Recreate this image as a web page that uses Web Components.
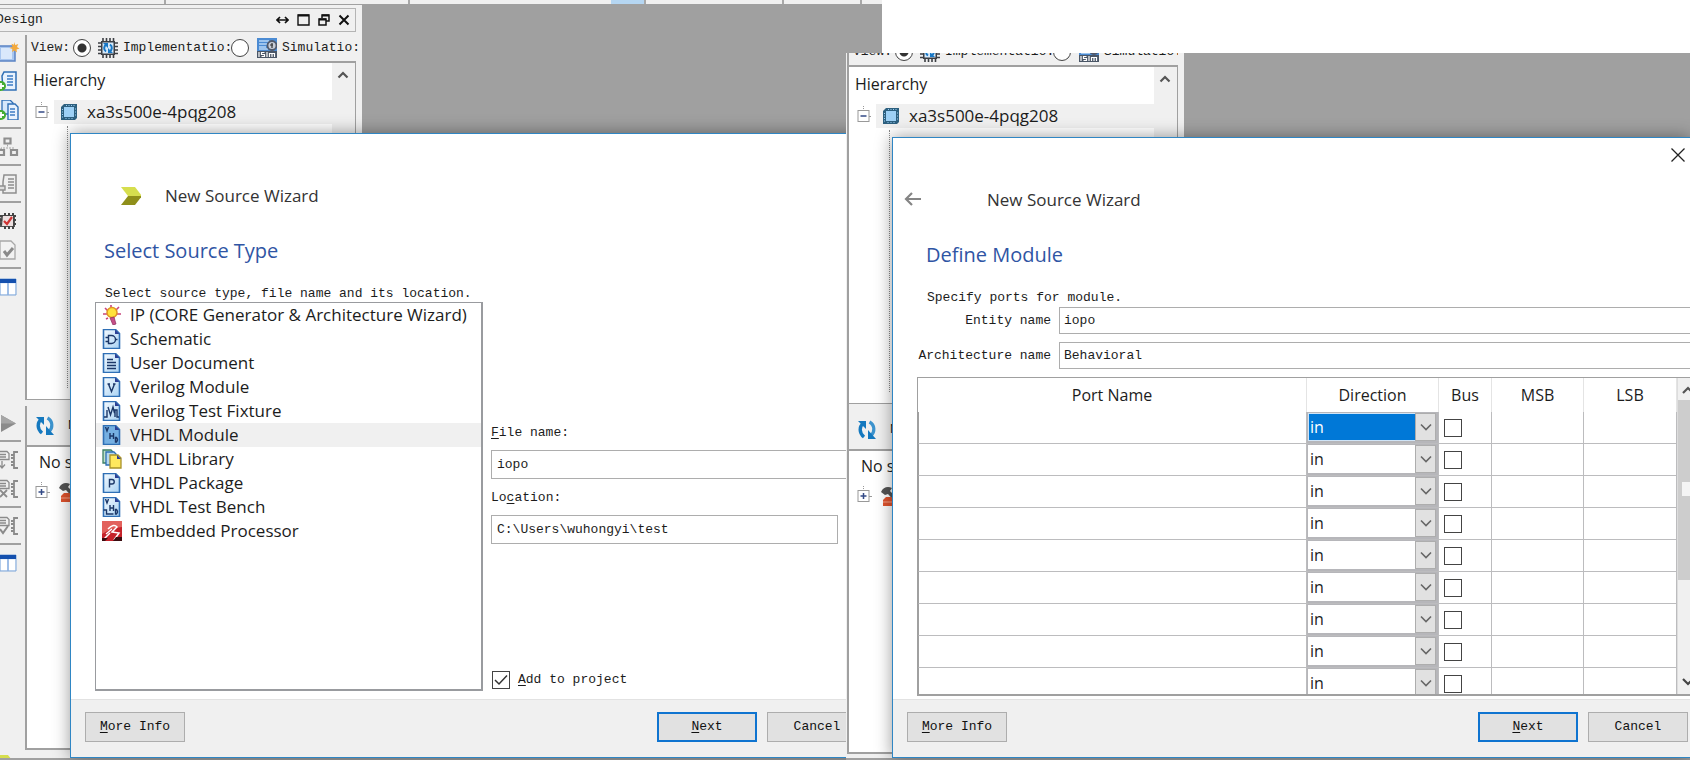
<!DOCTYPE html>
<html lang="en">
<head>
<meta charset="utf-8">
<title>New Source Wizard</title>
<style>
  html, body { margin: 0; background: #fff; }
  body {
    --ui: "Open Sans", "Noto Sans", sans-serif;
    --mono: "Liberation Mono", "DejaVu Sans Mono", monospace;
    font: 16px/24px var(--ui);
    color: #1c1c1c;
  }
</style>
</head>
<body>
<ise-page></ise-page>

<script>
const BASE = `
  *, *::before, *::after { box-sizing: border-box; }
  svg { display: block; flex: none; }
  input, select, button { font: inherit; color: inherit; margin: 0; border-radius: 0; outline: 0; }
  u { text-decoration: underline; text-underline-offset: 2px; }
`;

function define(name, css, html, setup) {
  customElements.define(name, class extends HTMLElement {
    constructor() {
      super();
      this.attachShadow({ mode: "open" });
    }
    connectedCallback() {
      const body = typeof html === "function" ? html(this) : html;
      this.shadowRoot.innerHTML = `<style>${BASE}${css}</style>${body}`;
      if (setup) setup(this);
    }
  });
}

/* ---------- icons ---------- */
const page = inner => `<path d="M1.500 .5h12l4 4v15h-16z" fill="url(#g)" stroke="#2f6fb5" stroke-width="1.600"/>
  <path d="M13 .5l4.500 4.500h-4.500z" fill="#2c3f94"/><g fill="none" stroke="#1b3768" stroke-width="1.400">${inner}</g>`;
const grad = `<defs><linearGradient id="g" x1="0" y1="0" x2="1" y2="1"><stop offset="0" stop-color="#f4faff"/><stop offset="1" stop-color="#a9d2f3"/></linearGradient></defs>`;
const pins = c => `<path d="M5 2v16M8.500 2v16M12 2v16M15.500 2v16M2 5h16M2 8.500h16M2 12h16M2 15.500h16" stroke="${c}" stroke-width="1.500"/>`;
const table = `<path d="M0 2h16v16H0z" fill="#eaf2fc" stroke="#7ba4d8"/><path d="M0 2h16v4H0z" fill="#1450ae"/><path d="M1 7h6v10H1zM9 7h6v10H9z" fill="#fff"/><path d="M8 6v12" stroke="#86ade0" stroke-width="1.500"/>`;
const script = inner => `<g fill="none" stroke="#8b8b8b" stroke-width="1.300"><path d="M0 1.500h7l2 2v6H0M0 4.500h6M0 7h6"/><path d="M18 2h-4v3h-3M14 5v10M11 15h3v3h4M11 8h3M11 12h3" stroke-width="1.800"/>${inner}</g>`;
const ICONS = {
  newSource: `<path d="M-2 4h17v15H-2z" fill="#a8c6ef" stroke="#5a83c4" stroke-width="1.500"/><path d="M1 6h11v11H1z" fill="#d9e8fb"/><path d="M14 0l1.300 3 3-1-1.300 3 2.500 1.500-3 1 .5 3-2.500-2-2.500 1.500.5-3-3-1 3-1.300-1-3 2.500 1z" fill="#f3a93c"/>`,
  addSource: `<path d="M4 1h12v18H3l-1-14z" fill="#e8f2fd" stroke="#2f6fb5" stroke-width="1.500"/><path d="M7 5h6M7 8h6M7 11h6M7 14h6" stroke="#3c7cc4" stroke-width="1.300"/><circle cx="1" cy="15" r="5" fill="#43ac32"/><path d="M-1 15h5M1 12v6" stroke="#fff" stroke-width="1.800"/>`,
  addCopy: `<path d="M2 0h8l3 3v11H2z" fill="#d6e8fb" stroke="#2f6fb5" stroke-width="1.300"/><path d="M8 4h7l3 3v13H8z" fill="#e8f2fd" stroke="#2f6fb5" stroke-width="1.400"/><path d="M10 9h5M10 12h5M10 15h5" stroke="#3c7cc4" stroke-width="1.300"/><circle cx="1" cy="15" r="5" fill="#43ac32"/><path d="M-1 15h5M1 12v6" stroke="#fff" stroke-width="1.800"/>`,
  blocks: `<g fill="none" stroke="#8e8e8e" stroke-width="2.200"><path d="M4.500 1.500h6v5h-6zM-2 13h6v5h-6zM11 13h6v5h-6z"/></g><path d="M7.500 7.500v3M1 12v-1h13v1" stroke="#a4a4a4" fill="none" stroke-dasharray="2 1"/>`,
  grayDoc: `<path d="M4 1h12v18H3V8z" fill="#efefef" stroke="#8e8e8e" stroke-width="1.500"/><path d="M8 5h6M8 8h6M8 11h6M8 14h6" stroke="#8e8e8e" stroke-width="1.300"/><path d="M-1 12h6v4h-6" fill="#ddd" stroke="#8e8e8e" stroke-width="1.400"/>`,
  chipCheck: `<path d="M4 4h11v12H0V7z" fill="#555"/><path d="M5 2v16M9 2v16M13 2v16M0 5h16M0 9h16M0 13h16" stroke="#444" stroke-width="2" /><path d="M3 5h10v10H2z" fill="#ece0e0"/><path d="M4 10l3 3 5-7" stroke="#d03434" stroke-width="2.200" fill="none"/>`,
  docCheck: `<path d="M0 1h11l4 4v14H0z" fill="#f2f2f2" stroke="#a8a8a8" stroke-width="1.300"/><path d="M4 11l3 4 6-7" stroke="#8a8a8a" stroke-width="3" fill="none"/>`,
  table,
  play: `<path d="M1 2l15 8.500L1 19z" fill="#8b8b8b"/><path d="M1 2l15 8.500H1z" fill="#a6a6a6"/>`,
  scriptDown: script(`<path d="M2 11v7M-1 14.500l3 3.500 3-3.500"/>`),
  scriptX: script(`<path d="M0 11l7 7M7 11l-7 7" stroke-width="1.800"/>`),
  scriptCheck: script(`<path d="M0 13l3 4 5-7" stroke-width="2"/>`),
  impl: `<path d="M3 3h14v14H3z" fill="#3c3f44"/><path d="M5 0v20M8.500 0v20M12 0v20M15.500 0v20M0 5h20M0 8.500h20M0 12h20M0 15.500h20" stroke="#3c3f44" stroke-width="1.600"/><path d="M4.500 4.500h11v11h-11z" fill="#d5e9fa"/><path d="M8.500 6.500a4 4 0 0 0-.5 7M11.500 13.500a4 4 0 0 0 .5-7" stroke="#1878c6" stroke-width="2" fill="none"/><path d="M5 5h5v5zM15 15h-5v-5z" fill="#1878c6"/>`,
  isim: `<path d="M0 0h20v14H0z" fill="#4b8bd3"/><path d="M2 3h10M2 6h8M2 9h7M2 11h9" stroke="#b9d8f6" stroke-width="1.300"/><path d="M0 13h20v7H0z" fill="#4a5666"/><path d="M2 14v5M4.500 18.500h3v-2h-3v-2h3M10 14v5M12.500 19v-3.500h5V19M15 15.500V19" stroke="#fff" stroke-width="1.200" fill="none"/><circle cx="15" cy="7.500" r="4.500" fill="#c8cdd6" stroke="#51596a" stroke-width="1.800"/><path d="M15 5v5M13 7h3" stroke="#333" stroke-width="1.200"/>`,
  device: `<path d="M5 2h13v14l-2 2H2V5z" fill="#2d607f"/><path d="M5 5h10v10H5z" fill="#9dd0f5"/><path d="M3 7.500h1M3 10h1M3 12.500h1M3 15h1M7.500 4v-1M10 4v-1M12.500 4v-1M15 4v-1M16 7h1M16 10h1M16 13h1M7 17v-1M10 17v-1M13 17v-1" stroke="#9dd0f5"/>`,
  refresh: `<path d="M6.500 3.500C2 6 2 13 7 17" stroke="#1579bf" stroke-width="3.400" fill="none"/><path d="M1 1h8v8z" fill="#1579bf"/><path d="M12.500 2C18 5 18 12 14 15.500" stroke="#3d93cd" stroke-width="3.200" fill="none"/><path d="M11 10v9h8z" fill="#1579bf"/>`,
  hammer: `<path d="M1 6C3 1 8 0 12 2L10 5l9 9-3 3-8-9-3 1z" fill="#555"/><path d="M3 20v-6l3-3h5l4 3v6z" fill="#e0532d"/><path d="M3 16h11" stroke="#f7a48a"/>`,
  logo: `<path d="M0 1h14l7 9H7z" fill="#d6de4e"/><path d="M7 10h14l-7 9H0z" fill="#8f8f1a"/>`,
  bulb: `<path d="M3 3l4 4M17 2l-3 3M1 9h4M15 9h4M9 0v3M4 14l2-1" stroke="#c9457d" stroke-width="1.600"/><circle cx="10" cy="7.500" r="5" fill="#ffe33c" stroke="#e29522" stroke-width="1.500"/><path d="M8 13l4-1 2 7-3 1z" fill="#c64f87" stroke="#8c2c5e" stroke-width=".7"/>`,
  schematic: page(`<path d="M3.500 8.500h3M3.500 12.500h3M13 10.500h2.500M6.500 6.500h3a4 4 0 0 1 0 8h-3z"/>`),
  userDoc: page(`<path d="M5 6.500h6M5 9.500h9M5 12.500h9M5 15.500h9"/>`),
  verilog: page(`<path d="M6.500 7l3 7.500L12.500 7M5.500 7h2.500M11 7h2.500"/>`),
  verilogTest: page(`<path d="M2 16h3V9M6 6l2.500 8L11 6l1.500 6M13 16V9h2v7h2"/>`),
  vhdl: page(`<path d="M3.500 2l1.500 4 1.500-4M8 8v6M11.500 8v6M8 11h3.500M13.500 12.500v4.500h1q2-2.200 0-4.500z"/>`).replace("url(#g)", "#76b0e2"),
  library: `<path d="M1 1h8l2 2v11H1z" fill="#bfe0c7" stroke="#3c7f64" stroke-width="1.300"/><path d="M4 3h8l2 2v11H4z" fill="#b4d8ef" stroke="#2f6fb5" stroke-width="1.300"/><path d="M8 6h8l3 3v10H8z" fill="#ffe85e" stroke="#a8912a" stroke-width="1.300"/><path d="M15 6l4 4h-4z" fill="#2c3f94"/>`,
  pkg: page(`<path d="M7.500 14.500V6.500h2.500a2 2 0 0 1 0 4.500H7.500"/>`),
  vhdlTest: page(`<path d="M3.500 2l1.500 4 1.500-4M8 8v6M11.500 8v6M8 11h3.500M13.500 12.500v4.500h1q2-2.200 0-4.500zM1.500 13h3v4h7"/>`),
  embedded: `<path d="M0 0h20v20H0z" fill="#c5222a"/><path d="M0 0h20v6Q9 7 0 13z" fill="#e2615c"/><path d="M2 18l6-6M6 8q6-6 9-2l-5 5 7 1-5 7M4 13l6-5" stroke="#fff" stroke-width="1.500" fill="none"/><path d="M0 17h6l-3 3H0zM14 16h6v4h-9z" fill="#3b0c10"/>`
};
define("ise-icon",
  `:host { display: block; flex: none; width: 20px; height: 20px; } svg { width: 100%; height: 100%; }`,
  el => `<svg viewBox="0 0 20 20" aria-hidden="true">${grad}${ICONS[el.getAttribute("name")]}</svg>`);

/* ---------- vertical tool strip ---------- */
define("tool-strip", `
  :host { display: block; width: 27px; margin-top: 3px; padding-top: 2px; background: #f0f0f0; border-right: 2px solid #a0a0a0; overflow: hidden; }
  :host([lower]) { margin-top: 6px; }
  button { display: flex; align-items: center; width: 100%; height: 29px; padding: 0; border: 0; background: none; }
  hr { height: 2px; margin: 3px 4px 3px 0; border: 0; background: #a0a0a0; }`,
  el => el.getAttribute("tools").split(" ").map(t => t === "-" ? "<hr>" :
    `<button type="button" aria-label="${t}"><ise-icon name="${t}"></ise-icon></button>`).join(""));

/* ---------- design panel ---------- */
define("view-bar", `
  :host { display: block; height: 29px; font: 13px/29px var(--mono); }
  div { display: flex; align-items: center; height: 31px; padding-left: 4px; white-space: nowrap; }
  :host([cropped]) { height: 12px; overflow: hidden; }
  :host([cropped]) div { margin-top: -17px; }
  label { display: flex; align-items: center; }
  label.a { width: 132px; } label.b { width: 101px; }
  ise-icon { margin-right: 5px; }
  input { appearance: none; flex: none; width: 18px; height: 18px; border: 1px solid #444; border-radius: 50%; background: #fff; }
  input:checked { background: radial-gradient(circle, #333 4px, #fff 5px); }
  .first { margin: 0 7px 0 3px; } .second { margin: 0 8px 0 1px; }`,
  `<div><span>View:</span><input class="first" type="radio" name="view" id="i" checked>
   <label class="a" for="i"><ise-icon name="impl"></ise-icon>Implementatio:</label>
   <input class="second" type="radio" name="view" id="s">
   <label class="b" for="s"><ise-icon name="isim"></ise-icon>Simulatio:</label></div>`);

define("hierarchy-tree", `
  :host { display: flex; min-height: 0; background: #fff; border: 1px solid #a0a0a0; border-top-width: 2px; border-left-width: 0; }
  .tree { flex: 1; padding: 5px 0 12px; }
  .head { padding-left: 6px; }
  .row { display: flex; align-items: center; margin: 8px 0 0 8px; }
  .row svg { margin-right: 5px; }
  .name { flex: 1; display: flex; align-items: center; gap: 8px; height: 24px; padding-left: 5px; background: #f0f0f0; font-size: 17px; }
  .stem { height: 262px; margin: 2px 0 0 40px; border-left: 1px dotted #888; }
  .bar { width: 23px; padding: 8px 0 0 5px; background: #f0f0f0; }`,
  `<div class="tree"><div class="head">Hierarchy</div>
    <div class="row"><svg width="14" height="20" viewBox="0 0 14 20"><path d="M6.500 0v4" stroke="#999" stroke-dasharray="1 1"/><path d="M12 10.500h2" stroke="#999"/><rect x="1" y="4.500" width="11" height="11" fill="#fff" stroke="#999"/><path d="M3.500 10h6" stroke="#334a86" stroke-width="1.500"/></svg>
    <div class="name"><ise-icon name="device"></ise-icon>xa3s500e-4pqg208</div></div>
    <div class="stem"></div></div>
   <div class="bar"><svg width="12" height="8" viewBox="0 0 12 8"><path d="M1.500 6.500L6 2l4.500 4.500" fill="none" stroke="#555" stroke-width="2.200"/></svg></div>`);

define("process-pane", `
  :host { display: flex; flex-direction: column; }
  .bar { display: flex; align-items: center; gap: 13px; height: 45px; padding: 6px 0 0 8px; font: 13px/20px var(--mono); }
  .box { flex: 1; background: #fff; border: 1px solid #a0a0a0; border-top-width: 2px; border-left-width: 0; border-bottom-width: 2px; padding: 3px 0 0 12px; }
  .row { display: flex; align-items: center; margin: 8px 0 0 -4px; gap: 8px; }`,
  `<div class="bar"><ise-icon name="refresh"></ise-icon><span>N</span></div>
   <div class="box"><div>No s</div>
     <div class="row"><svg width="15" height="20" viewBox="0 0 15 20"><path d="M6.500 0v4" stroke="#999" stroke-dasharray="1 1"/><path d="M12 10.500h3" stroke="#999"/><rect x="1" y="4.500" width="11" height="11" fill="#fff" stroke="#999"/><path d="M3.500 10h6M6.500 7v6" stroke="#334a86" stroke-width="1.500"/></svg>
     <ise-icon name="hammer"></ise-icon></div></div>`);

define("panel-title", `
  :host { display: flex; align-items: center; gap: 8px; height: 24px; margin: 3px 6px 0 0; padding: 0 5px 0 0; border: 1px solid #b4b4b4; border-left: 0; font: 13px/24px var(--mono); overflow: hidden; }
  span { flex: 1; margin-left: -4px; }
  button { padding: 0; border: 0; background: none; }`,
  `<span>Design</span>
   <button type="button" aria-label="Float"><svg width="13" height="12" viewBox="0 0 13 12"><path d="M2 6h9M4 3L1 6l3 3M9 3l3 3-3 3" fill="none" stroke="#111" stroke-width="1.700"/></svg></button>
   <button type="button" aria-label="Maximize"><svg width="13" height="12" viewBox="0 0 13 12"><path d="M1 1h11v10H1z" fill="none" stroke="#111" stroke-width="1.400"/><path d="M1 1.500h11" stroke="#111" stroke-width="2"/></svg></button>
   <button type="button" aria-label="Restore"><svg width="12" height="12" viewBox="0 0 12 12"><path d="M4 4V1h7v6H8M1 5h7v6H1z" fill="none" stroke="#111" stroke-width="1.500"/><path d="M4 1.500h7M1 5.500h7" stroke="#111" stroke-width="2"/></svg></button>
   <button type="button" aria-label="Close"><svg width="12" height="12" viewBox="0 0 12 12"><path d="M1.500 1.500l9 9M10.500 1.500l-9 9" stroke="#111" stroke-width="2"/></svg></button>`);

/* ---------- workspace: side panel, empty document area, and a dialog over both ---------- */
define("ise-workspace", `
  :host { display: grid; grid-template: auto minmax(0, 1fr) 2px / var(--side) minmax(0, 1fr); overflow: hidden; background: #a0a0a0; }
  .strip { grid-column: 1 / -1; height: 4px; display: flex; background: #f0f0f0; }
  .strip i { border-right: 2px solid #a8a8a8; }
  .strip .hot { background: linear-gradient(90deg, transparent 86%, #b5d6f2 0); }
  .side { grid-area: 2 / 1; display: flex; flex-direction: column; min-height: 0; background: #f0f0f0; }
  .full { border-top: 1px solid #a0a0a0; }
  .part { display: flex; }
  .part.top { height: 368px; }
  .part.low { flex: 1; min-height: 0; }
  .col { flex: 1; display: flex; flex-direction: column; min-width: 0; margin-right: 6px; }
  .cropped .col { border-left: 2px solid #a0a0a0; margin-left: 1px; }
  .cropped .part.top { height: 351px; }
  hierarchy-tree, process-pane { flex: 1; }
  .status { height: 8px; overflow: hidden; }
  .status ise-icon { margin: 4px 0 0 -6px; }
  .cropped .status { height: 4px; }
  .over { grid-area: 2 / 1 / 3 / 3; display: grid; z-index: 1; min-width: 0; }`,
  el => {
    const crop = el.hasAttribute("cropped");
    return `${crop ? "" : `<div class="strip"><i style="flex:166"></i><i style="flex:245"></i><i class="hot" style="flex:236"></i><i style="flex:138"></i><i style="flex:77"></i><span style="flex:20"></span></div>`}
    <div class="side ${crop ? "cropped" : "full"}">
      ${crop ? "" : "<panel-title></panel-title>"}
      <div class="part top">${crop ? "" : `<tool-strip tools="newSource addSource addCopy - blocks - grayDoc - chipCheck docCheck - table"></tool-strip>`}
        <div class="col"><view-bar ${crop ? "cropped" : ""}></view-bar><hierarchy-tree></hierarchy-tree></div></div>
      <div class="part low">${crop ? "" : `<tool-strip lower tools="play - scriptDown scriptX - scriptCheck - table"></tool-strip>`}
        <div class="col"><process-pane></process-pane></div></div>
      <div class="status">${crop ? "" : `<ise-icon name="logo"></ise-icon>`}</div>
    </div>
    <div class="over"><slot></slot></div>`;
  });

/* ---------- wizard dialog ---------- */
define("wizard-dialog", `
  :host { display: flex; flex-direction: column; min-width: 0; background: #fff; border: solid #2f86c4; border-width: 1px 0 1px 1px; box-shadow: 0 0 16px rgba(0,0,0,.4); }
  header { display: grid; grid-template-columns: 94px 1fr auto; align-items: center; padding-top: 44px; height: 80px; color: #333; }
  header button { padding: 0; border: 0; background: none; }
  .back { margin-left: 11px; }
  .logo { margin-left: 50px; }
  .close { align-self: start; margin: -34px 5px 0 0; }
  h1 { margin: 0; font-weight: 400; font-size: 17px; line-height: 36px; }
  h2 { margin: 22px 0 18px 33px; font-weight: 400; font-size: 20px; line-height: 30px; color: #2f55a4; }
  p { margin: 0 0 0 34px; font: 13px/20px var(--mono); }
  main { flex: 1; display: flex; flex-direction: column; min-height: 0; }
  footer { display: flex; gap: 10px; height: 58px; padding: 12px var(--end) 0 14px; background: #f0f0f0; border-top: 1px solid #e2e2e2; }
  footer button { width: 100px; height: 30px; padding: 0; background: #e1e1e1; border: 1px solid #adadad; font: 13px/20px var(--mono); color: #111; }
  footer .default { margin-left: auto; border: 2px solid #0f74d0; }`,
  el => `<header>${el.hasAttribute("back")
      ? `<button class="back" type="button" aria-label="Back"><svg width="18" height="16" viewBox="0 0 18 16"><path d="M17 7H3M8 1L2 7l6 6" fill="none" stroke="#858585" stroke-width="2.200"/></svg></button>`
      : `<ise-icon class="logo" name="logo"></ise-icon>`}
      <h1>New Source Wizard</h1>
      ${el.hasAttribute("back") ? `<button class="close" type="button" aria-label="Close"><svg width="14" height="14" viewBox="0 0 14 14"><path d="M.5 .5l13 13M13.500 .5l-13 13" stroke="#222" stroke-width="1.300"/></svg></button>` : ""}
    </header>
    <h2>${el.getAttribute("heading")}</h2>
    <p>${el.getAttribute("hint")}</p>
    <main><slot></slot></main>
    <footer><button type="button"><u>M</u>ore Info</button><button type="button" class="default"><u>N</u>ext</button><button type="button">Cancel</button></footer>`);

/* ---------- page one: source type ---------- */
define("source-type", `
  :host { display: block; }
  button { display: flex; align-items: center; gap: 8px; width: 100%; height: 24px; padding: 0 0 0 6px; border: 0; background: none; text-align: left; white-space: nowrap; }
  :host([selected]) button { background: #f0f0f0; }`,
  el => `<button type="button"><ise-icon name="${el.getAttribute("icon")}"></ise-icon><span><slot></slot></span></button>`);

define("source-form", `
  :host { flex: 1; display: grid; grid-template-columns: minmax(0, 388fr) minmax(0, 391fr); column-gap: 8px; margin: -2px 0 8px 24px; min-height: 0; font: 13px/20px var(--mono); }
  .list { border: 2px solid #999b9f; border-width: 1px 2px 2px 1px; font: 17px/24px var(--ui); }
  .fields { display: flex; flex-direction: column; padding-top: 121px; }
  input[type=text] { width: 100%; height: 29px; padding: 0 5px; border: 1px solid #adadad; background: #fff; }
  .name { display: flex; align-items: center; height: 29px; margin: 7px 0 9px; }
  .path { margin: 7px 44px 0 0; }
  .path input { display: block; }
  .add { display: flex; align-items: center; gap: 8px; margin-top: auto; padding: 0 0 1px 1px; }
  .add input { appearance: none; width: 18px; height: 18px; border: 1px solid #444; background: #fff; }
  .tick { display: grid; } .tick > * { grid-area: 1 / 1; } .tick svg { pointer-events: none; }`,
  `<div class="list"><slot></slot></div>
   <div class="fields">
     <label for="file"><u>F</u>ile name:</label>
     <div class="name"><input type="text" id="file" value="iopo"></div>
     <label for="loc">Lo<u>c</u>ation:</label>
     <div class="path"><input type="text" id="loc" value="C:\\Users\\wuhongyi\\test"></div>
     <div class="add"><span class="tick"><input type="checkbox" id="add" checked><svg width="18" height="18" viewBox="0 0 18 18"><path d="M3 9l4 4 8-8.500" fill="none" stroke="#333" stroke-width="1.500"/></svg></span><label for="add"><u>A</u>dd to project</label></div>
   </div>`,
  el => {
    const f = el.shadowRoot.getElementById("file");
    f.focus();
    f.setSelectionRange(4, 4);
  });

/* ---------- page two: ports ---------- */
define("port-table", `
  :host { display: flex; height: 319px; border: 2px solid #a0a0a0; border-width: 1px 0 2px 1px; overflow: hidden; }
  .view { flex: 1; min-width: 0; overflow: hidden; }
  table { width: 100%; border-spacing: 0; table-layout: fixed; }
  th { height: 34px; padding: 0; font-weight: 400; border-right: 1px solid #e4e4e4; }
  td { height: 32px; padding: 0; border: solid #bcbcbe; border-width: 0 1px 1px 0; }
  td:first-child { border-left: 1px solid #a0a0a0; }
  .dir { width: 132px; } .bus { width: 53px; } .msb { width: 92px; } .lsb { width: 93px; }
  .combo { display: grid; height: 31px; padding: 1px 2px 2px 1px; background: #b6b6ba; }
  .combo > * { grid-area: 1 / 1; }
  select { appearance: none; width: 100%; height: 28px; padding: 0 2px; border: 0; background: #fff; }
  .drop { justify-self: end; display: grid; place-items: center; width: 21px; height: 28px; background: #e1e1e1; border: 1px solid #adadad; pointer-events: none; }
  .on select { padding: 0 1px; background: #0078d7; color: #fff; border: 1px solid #cfe4f7; }
  input { display: block; appearance: none; width: 18px; height: 18px; margin-left: 5px; border: 1px solid #444; background: #fff; }
  .scroll { width: 13px; display: flex; flex-direction: column; background: #f0f0f0; border-left: 1px solid #ddd; }
  .scroll svg { margin: 8px 0 6px 4px; }
  .thumb { height: 180px; background: #cdcdcd; padding: 82px 0 0 4px; }
  .thumb i { display: block; height: 14px; background: #f4f4f4; }
  .scroll .down { margin: auto 0 8px 4px; }`,
  `<div class="view"><table><thead><tr><th>Port Name</th><th class="dir">Direction</th><th class="bus">Bus</th><th class="msb">MSB</th><th class="lsb">LSB</th></tr></thead>
   <tbody>${Array.from({ length: 9 }, (_, i) => `<tr><td></td><td><div class="combo${i ? "" : " on"}"><select aria-label="Direction ${i + 1}"><option>in</option><option>out</option><option>inout</option></select><span class="drop"><svg width="12" height="8" viewBox="0 0 12 8"><path d="M1 1.500L6 6.500l5-5" fill="none" stroke="#666" stroke-width="1.600"/></svg></span></div></td><td><input type="checkbox" aria-label="Bus ${i + 1}"></td><td></td><td></td></tr>`).join("")}</tbody></table></div>
   <div class="scroll"><svg width="12" height="8" viewBox="0 0 12 8"><path d="M1 7l5-5 5 5" fill="none" stroke="#555" stroke-width="2.200"/></svg><div class="thumb"><i></i></div><svg class="down" width="12" height="8" viewBox="0 0 12 8"><path d="M1 1l5 5 5-5" fill="none" stroke="#444" stroke-width="2.200"/></svg></div>`);

define("module-form", `
  :host { flex: 1; display: flex; flex-direction: column; margin: -1px 0 0 24px; font: 13px/20px var(--mono); }
  .grid { display: grid; grid-template-columns: 134px 1fr; gap: 8px; align-items: center; margin-bottom: 8px; }
  label { justify-self: end; white-space: nowrap; }
  .grid input { width: 100%; height: 27px; padding: 0 4px; background: #fff; border: solid #adadad; border-width: 1px 0 1px 1px; }
  port-table { font: 16px/24px var(--ui); }`,
  `<div class="grid"><label for="e">Entity name</label><input type="text" id="e" value="iopo"><label for="a">Architecture name</label><input type="text" id="a" value="Behavioral"></div>
   <port-table></port-table>`);

/* ---------- two overlapping workspaces ---------- */
define("ise-page", `
  :host { display: grid; grid-template: 53px minmax(0, 1fr) / minmax(0, 846fr) minmax(0, 36fr) minmax(0, 808fr); height: 100vh; min-height: 760px; }
  .one { grid-area: 1 / 1 / 3 / 3; --side: 362px; }
  .two { grid-area: 2 / 2 / 3 / 4; --side: 338px; z-index: 1; }
  .one wizard-dialog { margin: 129px 0 0 70px; --end: 15px; }
  .two wizard-dialog { margin: 84px 0 0 46px; --end: 2px; }`,
  `<ise-workspace class="one"><wizard-dialog heading="Select Source Type" hint="Select source type, file name and its location.">
     <source-form>
       <source-type icon="bulb">IP (CORE Generator &amp; Architecture Wizard)</source-type>
       <source-type icon="schematic">Schematic</source-type>
       <source-type icon="userDoc">User Document</source-type>
       <source-type icon="verilog">Verilog Module</source-type>
       <source-type icon="verilogTest">Verilog Test Fixture</source-type>
       <source-type icon="vhdl" selected>VHDL Module</source-type>
       <source-type icon="library">VHDL Library</source-type>
       <source-type icon="pkg">VHDL Package</source-type>
       <source-type icon="vhdlTest">VHDL Test Bench</source-type>
       <source-type icon="embedded">Embedded Processor</source-type>
     </source-form></wizard-dialog></ise-workspace>
   <ise-workspace class="two" cropped><wizard-dialog back heading="Define Module" hint="Specify ports for module.">
     <module-form></module-form></wizard-dialog></ise-workspace>`);
</script>
</body>
</html>
